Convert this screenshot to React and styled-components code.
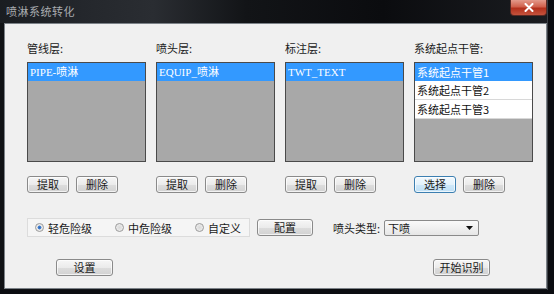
import styled, { createGlobalStyle } from "styled-components";

const GlobalStyle = createGlobalStyle`
  html, body {
    margin: 0;
    padding: 0;
    background: #0b0d11;
    overflow: hidden;
  }
  body {
    font-family: "Noto Sans CJK SC", "Liberation Sans", sans-serif;
  }
`;

const columns = [
  { label: "管线层:", items: ["PIPE-喷淋"], selected: 0, action: "提取" },
  { label: "喷头层:", items: ["EQUIP_喷淋"], selected: 0, action: "提取" },
  { label: "标注层:", items: ["TWT_TEXT"], selected: 0, action: "提取" },
  {
    label: "系统起点干管:",
    items: ["系统起点干管1", "系统起点干管2", "系统起点干管3"],
    selected: 0,
    action: "选择",
    focused: true,
  },
];

const radios = [
  { label: "轻危险级", checked: true },
  { label: "中危险级" },
  { label: "自定义" },
];

export default function App() {
  return (
    <>
      <GlobalStyle />
      <Window>
        <TitleBar>
          <Title>喷淋系统转化</Title>
          <CloseButton>
            <svg width="10" height="9" viewBox="0 0 10 9">
              <path d="M1.5 1 L8.5 8 M8.5 1 L1.5 8" stroke="#fff" strokeWidth="2" strokeLinecap="round" />
            </svg>
          </CloseButton>
        </TitleBar>
        <Client>
          <Columns>
            {columns.map((col) => (
              <Column key={col.label}>
                <Label>{col.label}</Label>
                <ListBox>
                  {col.items.map((item, i) => (
                    <ListItem key={item} $selected={i === col.selected} $latin={/^[A-Z]/.test(item)}>
                      {item}
                    </ListItem>
                  ))}
                </ListBox>
                <ButtonRow>
                  <Button $focused={col.focused}>{col.action}</Button>
                  <Button>删除</Button>
                </ButtonRow>
              </Column>
            ))}
          </Columns>

          <OptionsRow>
            <RadioGroup>
              {radios.map((r) => (
                <RadioItem key={r.label}>
                  <RadioDot $checked={r.checked} />
                  {r.label}
                </RadioItem>
              ))}
            </RadioGroup>
            <ConfigButton>配置</ConfigButton>
            <FieldLabel>喷头类型:</FieldLabel>
            <Select>
              <span>下喷</span>
              <svg width="7" height="4" viewBox="0 0 7 4">
                <path d="M0 0 H7 L3.5 4 Z" fill="#111" />
              </svg>
            </Select>
          </OptionsRow>

          <BottomRow>
            <WideButton>设置</WideButton>
            <WideButton>开始识别</WideButton>
          </BottomRow>
        </Client>
      </Window>
    </>
  );
}

const Window = styled.div`
  width: 548px;
  height: 290px;
  display: flex;
  flex-direction: column;
  background: linear-gradient(90deg, #101215 0%, #181b20 30%, #0a0b0e 60%, #141619 100%);
  border-right: 1px solid #3a3e44;
  box-sizing: border-box;
`;

const TitleBar = styled.div`
  height: 23px;
  display: flex;
  justify-content: space-between;
  align-items: flex-start;
  background: linear-gradient(
    90deg,
    #1a1d21 0%,
    #24272c 15%,
    #2a2d32 28%,
    #121417 45%,
    #0b0c0f 70%,
    #1a1c20 100%
  );
`;

const Title = styled.span`
  margin: 5px 0 0 6px;
  font-size: 11px;
  line-height: 13px;
  color: #a9acb0;
  letter-spacing: 0.5px;
`;

const CloseButton = styled.div`
  width: 37px;
  height: 16px;
  box-sizing: border-box;
  border: 1px solid #5a2a24;
  border-top: none;
  border-radius: 0 0 4px 4px;
  background: linear-gradient(180deg, #e39a8b 0%, #d0604c 45%, #b3301c 55%, #c4533d 100%);
  display: flex;
  align-items: center;
  justify-content: center;
`;

const Client = styled.div`
  flex: 1;
  margin: 0 0 1px 4px;
  background: #f0f0f0;
  border: 1px solid #7c8288;
  padding: 17px 0 0 22px;
  display: flex;
  flex-direction: column;
`;

const Columns = styled.div`
  display: grid;
  grid-template-columns: repeat(4, 119px);
  column-gap: 10px;
`;

const Column = styled.div`
  display: flex;
  flex-direction: column;
`;

const Label = styled.div`
  font-size: 11px;
  line-height: 14px;
  height: 14px;
  color: #1a1a1a;
  margin-bottom: 7px;
`;

const ListBox = styled.div`
  height: 100px;
  box-sizing: border-box;
  border: 1px solid #4a4a4a;
  background: #a8a8a8;
  display: flex;
  flex-direction: column;
`;

const ListItem = styled.div`
  height: 18px;
  line-height: 18px;
  padding-left: 2px;
  font-size: 11px;
  background: ${(p) => (p.$selected ? "#3399ff" : "#ffffff")};
  color: ${(p) => (p.$selected ? "#ffffff" : "#111")};
  font-family: ${(p) =>
    p.$latin
      ? '"Liberation Serif", "Noto Sans CJK SC", serif'
      : '"Noto Sans CJK SC", "Liberation Sans", sans-serif'};
  border-bottom: ${(p) => (p.$selected ? "none" : "1px solid #d8d8d8")};
`;

const ButtonRow = styled.div`
  display: flex;
  gap: 7px;
  margin-top: 14px;
`;

const Button = styled.div`
  width: 42px;
  height: 17px;
  box-sizing: border-box;
  border: 1px solid ${(p) => (p.$focused ? "#3c7fb1" : "#8a8a8a")};
  border-radius: 3px;
  background: ${(p) =>
    p.$focused
      ? "linear-gradient(180deg, #f2f9fe 0%, #e3f2fc 50%, #cfe8f9 51%, #bfe0f6 100%)"
      : "linear-gradient(180deg, #f6f6f6 0%, #ebebeb 50%, #dddddd 51%, #d2d2d2 100%)"};
  box-shadow: inset 0 0 0 1px rgba(255, 255, 255, 0.7);
  font-size: 11px;
  line-height: 15px;
  text-align: center;
  color: #1a1a1a;
`;

const OptionsRow = styled.div`
  display: flex;
  align-items: center;
  margin-top: 25px;
  height: 19px;
`;

const RadioGroup = styled.div`
  width: 223px;
  height: 19px;
  box-sizing: border-box;
  border: 1px solid #dcdcdc;
  background: #f5f5f5;
  display: flex;
  align-items: center;
  padding-left: 7px;
`;

const RadioItem = styled.label`
  width: 80px;
  display: flex;
  align-items: center;
  gap: 4px;
  font-size: 11px;
  color: #1a1a1a;
  &:last-child {
    width: auto;
  }
`;

const RadioDot = styled.span`
  width: 9px;
  height: 9px;
  box-sizing: border-box;
  border-radius: 50%;
  border: 1px solid #9a9a9a;
  background: ${(p) =>
    p.$checked
      ? "radial-gradient(circle, #2c64b8 0%, #4a88d6 35%, #e6e6e6 45%, #f6f6f6 100%)"
      : "radial-gradient(circle, #d8d8d8 0%, #f4f4f4 100%)"};
`;

const ConfigButton = styled(Button)`
  width: 56px;
  margin-left: 7px;
`;

const FieldLabel = styled.span`
  margin-left: 20px;
  font-size: 11px;
  color: #1a1a1a;
  width: 51px;
`;

const Select = styled.div`
  width: 95px;
  height: 16px;
  box-sizing: border-box;
  border: 1px solid #8a8a8a;
  border-radius: 2px;
  background: linear-gradient(180deg, #fafafa 0%, #f0f0f0 50%, #e6e6e6 100%);
  display: flex;
  align-items: center;
  justify-content: space-between;
  padding: 0 5px 0 3px;
  font-size: 11px;
  color: #1a1a1a;
`;

const BottomRow = styled.div`
  display: flex;
  justify-content: space-between;
  margin-top: 22px;
  padding: 0 56px 0 29px;
`;

const WideButton = styled(Button)`
  width: 57px;
`;
